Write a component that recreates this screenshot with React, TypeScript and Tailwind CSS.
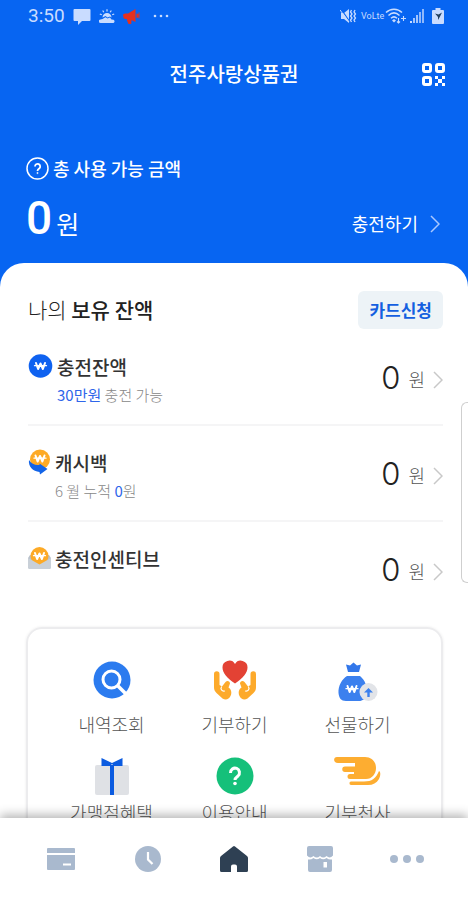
import type { ReactNode } from "react";

const Won = ({ x, y, color = "#fff" }: { x: number; y: number; color?: string }) => (
  <g
    transform={`translate(${x} ${y})`}
    fill="none"
    stroke={color}
    strokeWidth="2"
    strokeLinejoin="round"
    strokeLinecap="round"
  >
    <path d="M-4.500-3 -2.400 3 0-2.500 2.400 3 4.500-3" />
    <path d="M-6-.3H6" strokeWidth="1.3" />
  </g>
);

const Chevron = ({ className }: { className: string }) => (
  <svg className={className} width="10" height="18" viewBox="0 0 10 18" fill="none" stroke="currentColor" strokeWidth="1.5">
    <path d="M1 1l8 8-8 8" />
  </svg>
);

const StatusBar = () => (
  <div className="flex h-8 items-center justify-between pl-7 pr-6 text-[#c9dcff]">
    <div className="flex items-center gap-2">
      <span className="font-[Roboto] text-[19px] leading-8">3:50</span>
      <svg width="18" height="17" viewBox="0 0 18 17" fill="currentColor">
        <path d="M1.500 1h15a1 1 0 0 1 1 1v10a1 1 0 0 1-1 1H9l-4 4v-4H1.500a1 1 0 0 1-1-1V2a1 1 0 0 1 1-1z" />
      </svg>
      <svg width="16" height="14" viewBox="0 0 16 14" fill="currentColor">
        <path d="M1.500 14a1.500 1.500 0 0 1 0-3.500l2-.5 3-1.800 2 1.300 2.500-1 1.500 2 2 .2a1.800 1.800 0 0 1 0 3.300z" />
        <path d="M3.500 8.500a4.500 4.500 0 0 1 9 0L11 7.500 8.500 8.500 6.500 7z" />
        <path d="M8 .3v2.200M3.700 1.500l1.100 1.800M12.300 1.500l-1.100 1.800M.8 5l2 .8M15.200 5l-2 .8" stroke="currentColor" strokeWidth="1.200" />
      </svg>
      <svg width="17" height="15" viewBox="0 0 17 15" fill="#e5301f">
        <path d="M0 5.500 2 4.500h3L12.500 0v13L8.500 11l-.3 4H5.500L4 11.500V10H2L.5 9z" />
        <path d="M13.500 4.500c3 0 3 4.500 0 4.500z" />
        <path d="M16 3.500v6" stroke="#e5301f" />
      </svg>
      <svg className="ml-1" width="18" height="4" viewBox="0 0 18 4" fill="currentColor">
        <circle cx="3" cy="2" r="1.300" />
        <circle cx="9" cy="2" r="1.300" />
        <circle cx="15" cy="2" r="1.300" />
      </svg>
    </div>
    <div className="flex items-center gap-1">
      <svg width="17" height="16" viewBox="0 0 17 16" fill="currentColor">
        <path d="M1 5h3l5-4v14l-5-4H1z" />
        <path d="M1 1l9 13" stroke="#0765f2" strokeWidth="1.200" />
        <path d="M0 2l9 12" stroke="currentColor" />
        <path d="M11.500 2l-1 2 1.500 2-1.500 2L12 10l-1.500 2 1 2M15 2l-1 2 1.500 2L14 8l1.500 2-1.500 2 1 2" fill="none" stroke="currentColor" strokeWidth="1.300" />
      </svg>
      <span className="w-5 font-[Roboto] text-[9px] leading-none">VoLte</span>
      <svg width="21" height="16" viewBox="0 0 21 16" fill="none" stroke="currentColor" strokeWidth="1.500">
        <path d="M1 4.500c4.500-4.500 11.500-4.500 16 0M3.500 7.500c3.500-3.300 7.500-3.300 11 0M6 10.200c2-1.800 4-1.800 6 0" />
        <path d="M7 12.500 9 11l2 1.500-2 2z" fill="currentColor" stroke="none" />
        <path d="M13.500 10v5M12 13.500l1.500 1.500 1.500-1.500M16 10.500h5M18.500 8v5" strokeWidth="1.100" />
      </svg>
      <svg width="14" height="14" viewBox="0 0 14 14" fill="currentColor">
        <rect y="12" width="2" height="2" />
        <rect x="3" y="9" width="2" height="5" opacity=".8" />
        <rect x="6" y="6" width="2" height="8" opacity=".8" />
        <rect x="9" y="3" width="2" height="11" opacity=".7" />
        <rect x="12" width="2" height="14" opacity=".7" />
      </svg>
      <svg className="ml-1" width="12" height="16" viewBox="0 0 12 16" fill="currentColor">
        <path d="M3.500 0h5v2H11q1 0 1 1v12q0 1-1 1H1q-1 0-1-1V3q0-1 1-1h2.500z" />
        <path d="M3 5.500l3.500 1L10 4.500 8 8.500 6 12V9z" fill="#22405f" />
      </svg>
    </div>
  </div>
);

const ChargeIcon = () => (
  <svg width="25" height="26" viewBox="0 0 25 26">
    <circle cx="12.500" cy="13" r="11.800" fill="#0f62f0" />
    <Won x={12.5} y={13} />
  </svg>
);

const CashbackIcon = () => (
  <svg width="23" height="26" viewBox="0 0 23 26">
    <circle cx="12" cy="10.500" r="10" fill="#fdaa26" />
    <Won x={12} y={9.5} />
    <path d="M1 11c2.500 4 6 5.500 10.500 5v-1.500l8 5.500-7.500 5.500-.5-2.500C5 22.500 0 17.500 1 11z" fill="#1264e8" />
  </svg>
);

const IncentiveIcon = () => (
  <svg width="23" height="26" viewBox="0 0 23 26">
    <path d="M2 10h19l2 3v9q0 2-2 2H2q-2 0-2-2v-9z" fill="#b9c1cb" />
    <circle cx="11.500" cy="11" r="9" fill="#fdaa26" />
    <Won x={11.5} y={11} />
    <path d="M0 13l11.500 6.500L23 13v9q0 2-2 2H2q-2 0-2-2z" fill="#c9d0d8" />
  </svg>
);

const SearchIcon = () => (
  <svg width="38" height="38" viewBox="0 0 38 38" fill="none">
    <circle cx="19" cy="19" r="18.500" fill="#2b7bef" />
    <circle cx="18.500" cy="18.500" r="8.500" stroke="#fff" strokeWidth="3" />
    <path d="M24.500 24.500 34 34" stroke="#fff" strokeWidth="3.500" />
  </svg>
);

const HeartHandsIcon = () => (
  <svg width="44" height="40" viewBox="0 0 44 40" fill="none">
    <path d="M22 23.500C14 18 9.500 13 9.500 7.500A6.700 6.700 0 0 1 22 4 6.700 6.700 0 0 1 34.500 7.500c0 5.500-4.500 10.500-12.500 16z" fill="#e34234" />
    <g fill="#fdaa2b">
      <path d="M1 14a2.700 2.700 0 0 1 5.500 0v11l2.500 1.500 3.500-4.500c2-2 4.500-.5 4.500 1.500l-1.500 4c3 2 3.500 5.500 2 8.500-1.500 3.500-5 4.500-8 2.500L3.500 33C1.500 31 1 29.500 1 27z" />
      <path d="M43 14a2.700 2.700 0 0 0-5.500 0v11L35 26.500 31.500 22c-2-2-4.500-.5-4.500 1.500l1.500 4c-3 2-3.500 5.500-2 8.500 1.500 3.500 5 4.500 8 2.500l6-5.500c2-2 2.500-3.500 2.500-6z" />
    </g>
    <path d="M8.500 27c-1.500 2 .5 4.500 3 4M35.500 27c1.500 2-.5 4.500-3 4" stroke="#fff" strokeWidth="1.200" strokeLinecap="round" />
  </svg>
);

const MoneyBagIcon = () => (
  <svg className="mt-1" width="40" height="40" viewBox="0 0 40 40">
    <path d="M8 2.500l4 1 3.500-3 3.500 3 4-1-2 7.500H10z" fill="#3277ea" />
    <path d="M9 14h13c5 4 8 11 6 18-1 5-3 7-7 7H8c-5 0-7-3-7.500-8C0 24 4 17 9 14z" fill="#3b80ee" />
    <Won x={14} y={27} />
    <circle cx="30.500" cy="30" r="9" fill="#e2e4e8" />
    <path d="M30.500 35v-7" fill="none" stroke="#3b80ee" strokeWidth="2.400" />
    <path d="M26 30.500l4.500-4.500 4.500 4.500z" fill="#3b80ee" />
  </svg>
);

const GiftIcon = () => (
  <svg width="34" height="38" viewBox="0 0 34 38">
    <rect y="8" width="34" height="30" rx="2" fill="#dfe1e5" />
    <path d="M15 8h4v30h-4z" fill="#0b5be0" />
    <path d="M6.500 1 17 6l10.500-5v8H19l-2-2-2 2H6.500z" fill="#0b5be0" />
  </svg>
);

const HelpIcon = () => (
  <svg width="38" height="38" viewBox="0 0 38 38" fill="none">
    <circle cx="19" cy="19" r="18.500" fill="#15c07a" />
    <path d="M14.500 16a4.500 4.500 0 1 1 7.500 3c-2 1.500-3 2-3 4" stroke="#fff" strokeWidth="3" />
    <circle cx="19" cy="26.500" r="1.800" fill="#fff" />
  </svg>
);

const AngelHandIcon = () => (
  <svg className="-mt-2" width="48" height="30" viewBox="0 0 48 30" fill="none">
    <path
      d="M3 0h28c7 0 11 5 11 11s-4 11-10 11H16a2.500 2.500 0 0 1 0-5h4v-2h-9a2.500 2.500 0 0 1 0-5.500h10V6H4C-1 6-1 0 3 0z"
      fill="#fdad31"
    />
    <path d="M17 28c-2 0-2-3.500 0-3.500h13c8 0 12-3 15-10.500 2 1 1.500 5 0 8-2.500 4-6 6-11 6z" fill="#fdad31" />
  </svg>
);

type AccountRowProps = {
  icon: ReactNode;
  title: string;
  note?: ReactNode;
};

const AccountRow = ({ icon, title, note }: AccountRowProps) => (
  <li className="flex h-24 items-start justify-between border-b-2 border-[#f5f5f6] pt-[23px] last:border-transparent">
    <div className="flex gap-1">
      {icon}
      <div>
        <h3 className="text-[19px] font-medium leading-7 text-[#333]">{title}</h3>
        {note && <p className="text-[15px] font-light leading-7 text-[#888]">{note}</p>}
      </div>
    </div>
    <button className="flex h-12 items-center text-[#222]">
      <span className="font-[Inter] text-[31px] font-light leading-none">0</span>
      <span className="ml-2 mt-1 text-[18px] font-light text-[#555]">원</span>
      <Chevron className="ml-2 mt-1.5 text-[#c8c8c8]" />
    </button>
  </li>
);

const menuItems = [
  { label: "내역조회", icon: <SearchIcon /> },
  { label: "기부하기", icon: <HeartHandsIcon /> },
  { label: "선물하기", icon: <MoneyBagIcon /> },
  { label: "가맹점혜택", icon: <GiftIcon /> },
  { label: "이용안내", icon: <HelpIcon /> },
  { label: "기부천사", icon: <AngelHandIcon /> },
];

const BottomNav = () => (
  <nav className="relative grid h-[82px] shrink-0 grid-cols-5 bg-white px-[18px] text-[#a9b9ce] shadow-[0_-3px_10px_rgba(0,0,0,0.3)]">
    <button aria-label="카드" className="flex items-center justify-center">
      <svg width="28" height="24" viewBox="0 0 28 24" fill="currentColor">
        <path d="M1 1h26q1 0 1 1v4H0V2q0-1 1-1zM0 8h28v14q0 1-1 1H1q-1 0-1-1z" />
        <path d="M16 17.500h8" stroke="#fff" strokeWidth="2" />
      </svg>
    </button>
    <button aria-label="내역" className="flex items-center justify-center">
      <svg width="26" height="26" viewBox="0 0 26 26" fill="none">
        <circle cx="13" cy="13" r="13" fill="currentColor" />
        <path d="M13 6v7.500l4.500 4.500" stroke="#fff" strokeWidth="2.200" />
      </svg>
    </button>
    <button aria-label="홈" className="flex items-center justify-center">
      <svg width="28" height="26" viewBox="0 0 28 26" fill="#2e4053">
        <path d="M13 .5q1-1 2 0L27 10q1 .8 1 2v12.500q0 1.500-1.500 1.500H17v-5.500q0-2-2-2h-2q-2 0-2 2V26H1.500Q0 26 0 24.500V12q0-1.200 1-2z" />
      </svg>
    </button>
    <button aria-label="가맹점" className="flex items-center justify-center">
      <svg width="26" height="26" viewBox="0 0 26 26" fill="currentColor">
        <path d="M2 0h22q2 0 2 2v7.500q-3.200 3.500-6.500.5-3.200 3-6.500 0-3.200 3-6.500 0Q3.200 13 0 9.500V2Q0 0 2 0z" />
        <path d="M1 13.500q3 .5 5.500-1.500 3.200 2.500 6.500 0 3.200 2.500 6.500 0 2.500 2 5.500 1.500V24q0 2-2 2H3q-2 0-2-2z" />
        <path d="M16.500 16H20v5.500h-3.500z" fill="#fff" />
      </svg>
    </button>
    <button aria-label="더보기" className="flex items-center justify-center">
      <svg width="34" height="8" viewBox="0 0 34 8" fill="currentColor">
        <circle cx="4" cy="4" r="4" />
        <circle cx="17" cy="4" r="4" />
        <circle cx="30" cy="4" r="4" />
      </svg>
    </button>
  </nav>
);

const App = () => {
  return (
    <div className="relative flex h-screen flex-col overflow-hidden bg-[#0765f2] font-['Noto_Sans_CJK_KR',sans-serif]">
      <main className="min-h-0 flex-1 overflow-hidden">
        <StatusBar />
        <header className="grid h-[84px] grid-cols-[1fr_auto_1fr] items-center px-[23px] text-white">
          <h1 className="col-start-2 text-[20px] font-medium">전주사랑상품권</h1>
          <button aria-label="QR 결제" className="justify-self-end">
            <svg width="23" height="23" viewBox="0 0 23 23" fill="none" stroke="#fff" strokeWidth="3">
              <rect x="1.500" y="1.500" width="7" height="7" rx="1.500" />
              <rect x="14.500" y="1.500" width="7" height="7" rx="1.500" />
              <rect x="1.500" y="14.500" width="7" height="7" rx="1.500" />
              <path d="M13 13h3v3h-3zM20 13h3v3h-3zM16 16h4v4h-4zM13 20h3v3h-3zM20 20h3v3h-3z" fill="#fff" stroke="none" />
            </svg>
          </button>
        </header>

        <section className="px-[26px] pb-4 pt-9 text-white">
          <h2 className="flex items-center gap-1 text-[18px] font-medium leading-8">
            <svg width="23" height="23" viewBox="0 0 23 23" fill="none" stroke="#fff">
              <circle cx="11.500" cy="11.500" r="10.500" strokeWidth="1.500" />
              <path d="M9 9.500a2.600 2.600 0 1 1 4.300 2c-1.300.9-1.800 1.200-1.800 2.500" strokeWidth="1.800" />
              <circle cx="11.500" cy="16" r=".6" />
            </svg>
            총 사용 가능 금액
          </h2>
          <div className="mt-1 flex h-[59px] items-center justify-between">
            <p className="flex items-baseline gap-1">
              <span className="font-['Liberation_Sans_Narrow',Roboto] text-[46px] font-medium leading-none">0</span>
              <span className="text-[25px] leading-none">원</span>
            </p>
            <button className="mr-0.5 mt-3 flex items-center gap-3 text-[18px]">
              충전하기
              <Chevron className="text-[#a9c8ff]" />
            </button>
          </div>
        </section>

        <section className="rounded-t-3xl bg-white pb-10 pl-7 pr-[25px] pt-7">
          <div className="flex items-center justify-between">
            <h2 className="text-[21px] font-light text-[#222]">
              나의 <b className="font-medium">보유 잔액</b>
            </h2>
            <button className="h-[38px] rounded-md bg-[#edf3f7] px-[11px] text-[17px] font-bold text-[#145fe0]">
              카드신청
            </button>
          </div>
          <ul className="mt-px">
            <AccountRow
              icon={<ChargeIcon />}
              title="충전잔액"
              note={
                <>
                  <span className="font-normal text-[#2f66ea]">30만원</span> 충전 가능
                </>
              }
            />
            <AccountRow
              icon={<CashbackIcon />}
              title="캐시백"
              note={
                <>
                  6 월 누적 <span className="font-normal text-[#2f66ea]">0</span>원
                </>
              }
            />
            <AccountRow icon={<IncentiveIcon />} title="충전인센티브" />
          </ul>

          <div className="-ml-0.5 mt-[9px] grid grid-cols-3 rounded-2xl border-2 border-[#ececee] px-[22px] pb-6 pt-[29px] shadow-[0_0_3px_rgba(0,0,0,0.08)]">
            {menuItems.map(({ label, icon }, index) => (
              <button key={label} className="flex h-24 flex-col items-center text-[18px] font-light leading-7 text-[#555]">
                <span className={index < 3 ? "mb-2 flex h-11 items-center" : "flex h-11 items-center"}>{icon}</span>
                {label}
              </button>
            ))}
          </div>
        </section>
      </main>
      <BottomNav />
      {/* edge panel handle */}
      <div className="absolute right-0 top-[402px] h-[181px] w-[7px] rounded-l-md border border-r-0 border-[#cfcfcf] bg-white" />
    </div>
  );
};

export default App;
